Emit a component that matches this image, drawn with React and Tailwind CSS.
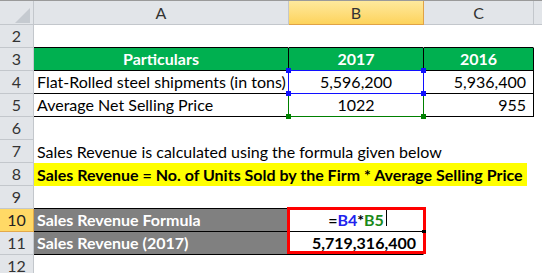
import React from "react";

const HB = "border-[#c3c7cc]";

function RowHead({ n, active }) {
  return (
    <div
      className={`w-[34px] shrink-0 h-full flex items-center justify-center border-r border-b text-[16px] ${
        active ? "bg-[#ffd966] border-[#e3a94a] text-[#222]" : `bg-[#e2e5e9] ${HB} text-[#333]`
      }`}
    >
      {n}
    </div>
  );
}

function Row({ n, active, children }) {
  return (
    <div className="flex h-[23px]">
      <RowHead n={n} active={active} />
      {children}
    </div>
  );
}

function Cell({ w, className = "", children }) {
  return (
    <div className={`${w} shrink-0 h-full border-r border-b flex items-center overflow-visible whitespace-nowrap ${className}`}>
      {children}
    </div>
  );
}

const WA = "w-[255px]";
const WB = "w-[135px]";
const WC = "w-[110px]";
const WD = "flex-1";

export default function App() {
  return (
    <div
      className="relative w-[542px] h-[273px] overflow-hidden bg-white text-black"
      style={{ fontFamily: "Lato, 'Liberation Sans', sans-serif" }}
    >
      {/* column header */}
      <div className="flex h-[25px] border-t border-[#9a9a9a]">
        <div className={`w-[34px] shrink-0 h-full bg-[#e2e5e9] border-r border-b ${HB} relative`}>
          <svg className="absolute left-[14px] top-[7px]" width="17" height="16" viewBox="0 0 17 16">
            <polygon points="16,0 16,15 1,15" fill="#c5cad0" />
          </svg>
        </div>
        <div className={`${WA} shrink-0 h-full bg-[#e2e5e9] border-r border-b ${HB} flex items-center justify-center text-[16px] text-[#333]`}>A</div>
        <div className="w-[135px] shrink-0 h-full bg-gradient-to-b from-[#fee99c] to-[#fdd35a] border-b border-r border-[#e0a246] flex items-center justify-center text-[16px] text-[#333]">B</div>
        <div className={`${WC} shrink-0 h-full bg-[#e2e5e9] border-r border-b ${HB} flex items-center justify-center text-[16px] text-[#333]`}>C</div>
        <div className={`flex-1 h-full bg-[#e2e5e9] border-b ${HB}`} />
      </div>

      <Row n={2}>
        <Cell w={WA} className="border-b-black border-r-white" />
        <Cell w={WB} className="border-b-black border-r-white" />
        <Cell w={WC} className="border-b-black border-r-white" />
        <Cell w={WD} className="border-white" />
      </Row>

      <Row n={3}>
        <Cell w={WA} className="bg-[#00b050] border-black justify-center font-bold text-white text-[16px]">Particulars</Cell>
        <Cell w={WB} className="bg-[#00b050] border-black justify-center font-bold text-white text-[16px]">2017</Cell>
        <Cell w={WC} className="bg-[#00b050] border-black justify-center font-bold text-white text-[16px]">2016</Cell>
        <Cell w={WD} className="border-white" />
      </Row>

      <Row n={4}>
        <Cell w={WA} className="border-black pl-[3px] text-[16px]">Flat-Rolled steel shipments (in tons)</Cell>
        <Cell w={WB} className="border-black justify-center text-[16px]">5,596,200</Cell>
        <Cell w={WC} className="border-black justify-end pr-[7px] text-[16px]">5,936,400</Cell>
        <Cell w={WD} className="border-white" />
      </Row>

      <Row n={5}>
        <Cell w={WA} className="border-black pl-[3px] text-[16px]">Average Net Selling Price</Cell>
        <Cell w={WB} className="border-black justify-center text-[16px]">1022</Cell>
        <Cell w={WC} className="border-black justify-end pr-[7px] text-[16px]">955</Cell>
        <Cell w={WD} className="border-white" />
      </Row>

      <Row n={6}>
        <div className="flex-1 h-full" />
      </Row>

      <Row n={7}>
        <div className="flex-1 h-full flex items-center pl-[3px] text-[16px] whitespace-nowrap">
          Sales Revenue is calculated using the formula given below
        </div>
      </Row>

      <Row n={8}>
        <div className="flex-1 h-full flex items-start">
          <div className="w-[493px] h-[23px] bg-[#ffff00] flex items-center pl-[3px] font-bold text-[16px] whitespace-nowrap">
            Sales Revenue = No. of Units Sold by the Firm * Average Selling Price
          </div>
        </div>
      </Row>

      <Row n={9}>
        <Cell w={WA} className="border-b-black border-r-white" />
        <Cell w={WB} className="border-b-black border-r-white" />
        <Cell w={WC} className="border-white" />
        <Cell w={WD} className="border-white" />
      </Row>

      <Row n={10} active>
        <Cell w={WA} className="bg-[#808080] border-black pl-[3px] font-bold text-white text-[16px]">Sales Revenue Formula</Cell>
        <Cell w={WB} className="border-b-black border-r-white justify-center font-bold text-[16px]">
          <span className="relative">
            =<span className="text-[#2222ee]">B4</span>*<span className="text-[#1a8a1a]">B5</span>
            <span className="absolute -right-[3px] -top-[1px] w-px h-[19px] bg-black" />
          </span>
        </Cell>
        <Cell w={WC} className="border-white" />
        <Cell w={WD} className="border-white" />
      </Row>

      <Row n={11}>
        <Cell w={WA} className="bg-[#808080] border-black pl-[3px] font-bold text-white text-[16px]">Sales Revenue (2017)</Cell>
        <Cell w={WB} className="border-b-black border-r-white justify-end pr-[7px] font-bold text-[16px]">5,719,316,400</Cell>
        <Cell w={WC} className="border-white" />
        <Cell w={WD} className="border-white" />
      </Row>

      <Row n={12}>
        <div className="flex-1 h-full" />
      </Row>

      {/* selection overlays */}
      <div className="absolute left-[288px] top-[70px] w-[136px] h-[24px] border border-[#1010ff]" />
      <div className="absolute left-[288px] top-[94px] w-[136px] h-[23px] border-l border-r border-b border-[#008000]" />
      <div className="absolute left-[286px] top-[68px] w-[5px] h-[5px] bg-[#1010ff]" />
      <div className="absolute left-[421px] top-[68px] w-[5px] h-[5px] bg-[#1010ff]" />
      <div className="absolute left-[286px] top-[91px] w-[5px] h-[5px] bg-[#1010ff]" />
      <div className="absolute left-[421px] top-[91px] w-[5px] h-[5px] bg-[#1010ff]" />
      <div className="absolute left-[286px] top-[114px] w-[5px] h-[5px] bg-[#008000]" />
      <div className="absolute left-[421px] top-[114px] w-[5px] h-[5px] bg-[#008000]" />

      {/* red highlight box */}
      <div className="absolute left-[287px] top-[207px] w-[139px] h-[47px] border-[3px] border-[#ff0000]" />
      <div className="absolute left-[422px] top-[230px] w-[4px] h-[3px] bg-black" />
    </div>
  );
}
